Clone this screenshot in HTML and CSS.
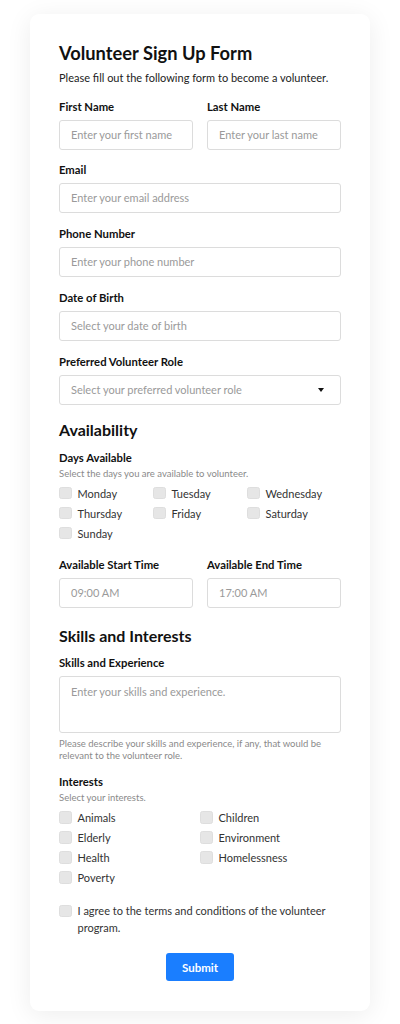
FILE: index.html
```html
<!DOCTYPE html>
<html lang="en">
<head>
<meta charset="utf-8">
<title>Volunteer Sign Up Form</title>
<link rel="stylesheet" href="styles.css">
</head>
<body>
<main class="card">
  <h1 class="title">Volunteer Sign Up Form</h1>
  <p class="intro">Please fill out the following form to become a volunteer.</p>

  <div class="row">
    <div class="field">
      <label class="label">First Name</label>
      <div class="input placeholder">Enter your first name</div>
    </div>
    <div class="field">
      <label class="label">Last Name</label>
      <div class="input placeholder">Enter your last name</div>
    </div>
  </div>

  <div class="field">
    <label class="label">Email</label>
    <div class="input placeholder">Enter your email address</div>
  </div>

  <div class="field">
    <label class="label">Phone Number</label>
    <div class="input placeholder">Enter your phone number</div>
  </div>

  <div class="field">
    <label class="label">Date of Birth</label>
    <div class="input placeholder">Select your date of birth</div>
  </div>

  <div class="field">
    <label class="label">Preferred Volunteer Role</label>
    <div class="input select placeholder">
      <span>Select your preferred volunteer role</span>
      <span class="caret"></span>
    </div>
  </div>

  <h2 class="section">Availability</h2>
  <div class="group">
    <div class="label">Days Available</div>
    <div class="hint">Select the days you are available to volunteer.</div>
    <div class="checks three">
      <div class="check"><span class="box"></span>Monday</div>
      <div class="check"><span class="box"></span>Tuesday</div>
      <div class="check"><span class="box"></span>Wednesday</div>
      <div class="check"><span class="box"></span>Thursday</div>
      <div class="check"><span class="box"></span>Friday</div>
      <div class="check"><span class="box"></span>Saturday</div>
      <div class="check"><span class="box"></span>Sunday</div>
    </div>
  </div>

  <div class="row time-row">
    <div class="field">
      <label class="label">Available Start Time</label>
      <div class="input placeholder">09:00 AM</div>
    </div>
    <div class="field">
      <label class="label">Available End Time</label>
      <div class="input placeholder">17:00 AM</div>
    </div>
  </div>

  <h2 class="section skills-head">Skills and Interests</h2>
  <div class="group">
    <label class="label">Skills and Experience</label>
    <div class="input textarea placeholder">Enter your skills and experience.</div>
    <div class="hint hint-multi">Please describe your skills and experience, if any, that would be relevant to the volunteer role.</div>
  </div>

  <div class="group interests">
    <div class="label">Interests</div>
    <div class="hint">Select your interests.</div>
    <div class="checks two">
      <div class="check"><span class="box"></span>Animals</div>
      <div class="check"><span class="box"></span>Children</div>
      <div class="check"><span class="box"></span>Elderly</div>
      <div class="check"><span class="box"></span>Environment</div>
      <div class="check"><span class="box"></span>Health</div>
      <div class="check"><span class="box"></span>Homelessness</div>
      <div class="check"><span class="box"></span>Poverty</div>
    </div>
  </div>

  <div class="agree">
    <span class="box"></span>
    <span class="agree-text">I agree to the terms and conditions of the volunteer program.</span>
  </div>

  <div class="actions">
    <button class="submit" type="button">Submit</button>
  </div>
</main>
</body>
</html>
```

FILE: styles.css
```css
* {
  box-sizing: border-box;
}

html, body {
  background: #ffffff;
}

body {
  margin: 0;
  padding: 14px 30px 14px;
  font-family: "Lato", "Noto Sans", sans-serif;
  color: #333;
}

.card {
  background: #fff;
  border-radius: 9px;
  box-shadow: 0 4px 26px rgba(0, 0, 0, 0.075);
  padding: 27px 29px 30px;
}

.title {
  margin: 0;
  font-size: 18.3px;
  line-height: 24px;
  font-weight: 700;
  color: #111;
}

.intro {
  margin: 5px 0 0;
  font-size: 11px;
  line-height: 16px;
  color: #222;
}

.row {
  display: grid;
  grid-template-columns: 1fr 1fr;
  column-gap: 14px;
}

.intro + .row {
  margin-top: 12.5px;
}

.field {
  margin-bottom: 12.75px;
  display: flex;
  flex-direction: column;
}

.label {
  display: block;
  font-size: 11.3px;
  line-height: 16px;
  font-weight: 700;
  color: #111;
}

.input {
  margin-top: 5px;
  height: 30px;
  border: 1px solid #dcdcdc;
  border-radius: 3px;
  padding: 0 11px;
  display: flex;
  align-items: center;
  font-size: 11px;
  line-height: 16px;
}

.placeholder {
  color: #9a9a9a;
}

.select {
  justify-content: space-between;
}

.caret {
  width: 0;
  height: 0;
  border-left: 3.5px solid transparent;
  border-right: 3.5px solid transparent;
  border-top: 4px solid #111;
  margin-right: 5px;
}

.section {
  margin: 15.5px 0 0;
  font-size: 16px;
  line-height: 20px;
  font-weight: 700;
  color: #111;
}

.group {
  margin-top: 8px;
}

.section + .group {
  margin-top: 9.5px;
}

.hint {
  margin-top: 1px;
  font-size: 9.5px;
  line-height: 13px;
  color: #8a8a8a;
}

.checks {
  display: grid;
  margin-top: 3.5px;
}

.checks.three {
  grid-template-columns: repeat(3, 1fr);
}

.checks.two {
  grid-template-columns: repeat(2, 1fr);
}

.check {
  display: flex;
  align-items: center;
  height: 20px;
  font-size: 11px;
  color: #333;
}

.box {
  flex: none;
  width: 12.5px;
  height: 12.5px;
  background: #e6e6e6;
  border: 1px solid #dedede;
  border-radius: 2.5px;
  margin-right: 6px;
}

.time-row {
  margin-top: 14px;
}

.time-row .field {
  margin-bottom: 0;
}

.skills-head {
  margin-top: 17.5px;
}

.textarea {
  height: 57px;
  align-items: flex-start;
  padding-top: 7px;
  padding-bottom: 7px;
}

.hint-multi {
  margin-top: 5px;
  line-height: 11.5px;
}

.group.interests {
  margin-top: 13px;
}

.agree {
  margin-top: 14.5px;
  display: flex;
  align-items: flex-start;
  font-size: 11px;
  line-height: 17px;
  color: #333;
}

.agree .box {
  margin-top: 2.5px;
}

.actions {
  display: flex;
  justify-content: center;
  margin-top: 17px;
}

.submit {
  width: 68px;
  height: 28px;
  border: none;
  border-radius: 3px;
  background: #1a7eff;
  color: #fff;
  font-family: inherit;
  font-size: 11.5px;
  font-weight: 700;
  cursor: pointer;
}
```
